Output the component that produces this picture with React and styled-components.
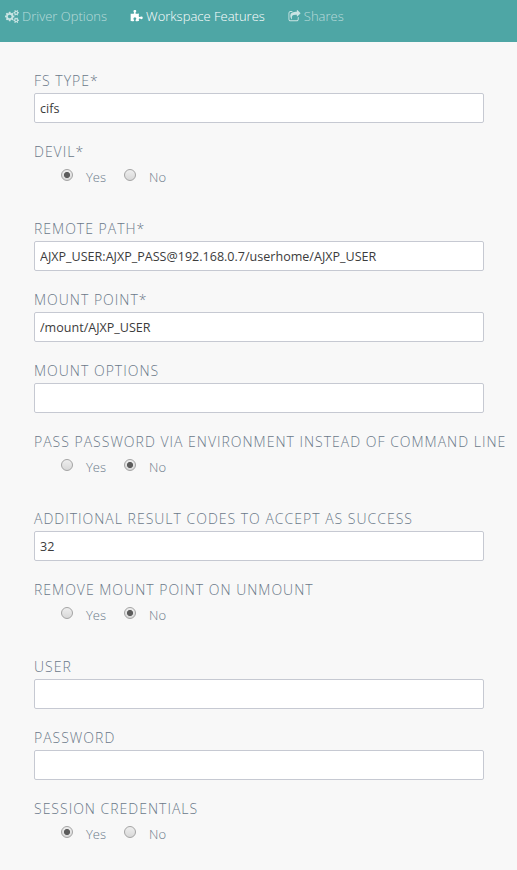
import React from "react";
import styled, { createGlobalStyle } from "styled-components";

const Global = createGlobalStyle`
  * { box-sizing: border-box; }
  body { margin: 0; background: #f8f8f8; font-family: "Open Sans", sans-serif; overflow: hidden; }
`;

const Page = styled.div`
  width: 517px;
  height: 870px;
  overflow: hidden;
  background: #f8f8f8;
`;

const TabBar = styled.nav`
  display: flex;
  height: 42px;
  padding: 6px 0 0 5px;
  gap: 23px;
  background: #4ea6a5;
`;

const Tab = styled.a`
  display: flex;
  gap: 3px;
  height: 19px;
  align-items: center;
  font-size: 13px;
  font-weight: 300;
  white-space: nowrap;
  color: ${(p) => (p.$active ? "#fff" : "rgba(255,255,255,0.6)")};
`;

const Icon = styled.svg`
  flex: none;
  display: block;
  height: 13px;
  margin-top: 1px;
  width: ${(p) => p.$width}px;
  fill: ${(p) => (p.$solid ? "#fff" : "rgba(255,255,255,0.7)")};
`;

const Form = styled.form`
  padding: 28px 0 0 34px;
`;

const Field = styled.div`
  height: ${(p) => (p.$choice ? 77 : 71)}px;
`;

const Label = styled.div`
  height: 23px;
  line-height: 22px;
  font-size: 14px;
  font-weight: 300;
  letter-spacing: 1px;
  text-transform: uppercase;
  white-space: nowrap;
  color: #6b7889;
`;

const Input = styled.input`
  display: block;
  width: 450px;
  height: 30px;
  padding: 0 5px;
  border: 1px solid #c6c9d2;
  border-radius: 2px;
  background: #fff;
  font: 400 12.56px "Open Sans", sans-serif;
  color: #3c3c3c;
  outline: none;
`;

const Choices = styled.div`
  display: flex;
  padding: 1px 0 0 27px;
  height: 25px;
`;

const Choice = styled.label`
  display: flex;
  width: 63px;
  gap: 13px;
  font-size: 13px;
  line-height: 24px;
  font-weight: 300;
  color: #6b7889;
`;

const Dot = styled.span`
  width: 12px;
  height: 12px;
  margin-top: 4px;
  border: 1px solid #a4a4a4;
  border-radius: 50%;
  background: ${(p) => (p.$on ? "radial-gradient(circle, #5c5c5c 0 2.7px, transparent 3.4px)," : "")}
    linear-gradient(#eee, #d8d8d8);
`;

const fields = [
  { label: "FS Type*", value: "cifs" },
  { label: "Devil*", choice: "Yes" },
  { label: "Remote Path*", value: "AJXP_USER:AJXP_PASS@192.168.0.7/userhome/AJXP_USER" },
  { label: "Mount Point*", value: "/mount/AJXP_USER" },
  { label: "Mount Options", value: "" },
  { label: "Pass password via environment instead of command line", choice: "No" },
  { label: "Additional result codes to accept as success", value: "32" },
  { label: "Remove mount point on unmount", choice: "No" },
  { label: "User", value: "" },
  { label: "Password", value: "" },
  { label: "Session credentials", choice: "Yes" },
];

const smallCog =
  "v140q0 16-149 31-12 27-30 52 51 113 51 138 0 4-4 7-122 71-124 71-8 0-46-47t-52-68q-20 2-30 2t-30-2q-14 21-52 68t-46 47q-2 0-124-71-4-3-4-7 0-25 51-138-18-25-30-52-149-15-149-31v-140q0-16 149-31 13-29 30-52-51-113-51-138 0-4 4-7 4-2 35-20t59-34 30-16q8 0 46 46.500t52 67.500q20-2 30-2t30 2q51-71 92-112l6-2q4 0 124 70 4 3 4 7 0 25-51 138 17 23 30 52 149 15 149 31z";

function CogsIcon() {
  return (
    <Icon $width={14} viewBox="0 0 1920 1792">
      <path d="M896 896q0-106-75-181t-181-75-181 75-75 181 75 181 181 75 181-75 75-181zM1280 805v185q0 10-7 19.500t-16 10.500l-155 24q-11 35-32 76 34 48 90 115 7 11 7 20 0 12-7 19-23 30-82.500 89.500t-78.500 59.500q-11 0-21-7l-115-90q-37 19-77 31-11 108-23 155-7 24-30 24h-186q-11 0-20-7.500t-10-17.500l-23-153q-34-10-75-31l-118 89q-7 7-20 7-11 0-21-8-144-133-144-160 0-9 7-19 10-14 41-53t47-61q-23-44-35-82l-152-24q-10-1-17-9.500t-7-19.500v-185q0-10 7-19.500t16-10.500l155-24q11-35 32-76-34-48-90-115-7-11-7-20 0-12 7-20 22-30 82-89t79-59q11 0 21 7l115 90q34-18 77-32 11-108 23-154 7-24 30-24h186q11 0 20 7.500t10 17.500l23 153q34 10 75 31l118-89q8-7 20-7 11 0 21 8 144 133 144 160 0 8-7 19-12 16-42 54t-45 60q23 48 34 82l152 23q10 2 17 10.500t7 19.500z" fillRule="evenodd" />
      <path fillRule="evenodd" d={`M1664 1408q0-52-38-90t-90-38-90 38-38 90q0 53 37.500 90.500t90.500 37.500 90.500-37.500 37.500-90.500zM1920 1338${smallCog}`} />
      <path fillRule="evenodd" d={`M1664 384q0-52-38-90t-90-38-90 38-38 90q0 53 37.500 90.500t90.500 37.500 90.500-37.500 37.500-90.500zM1920 314${smallCog}`} />
    </Icon>
  );
}

function PuzzleIcon() {
  return (
    <Icon $width={13} $solid viewBox="0 0 1792 1792">
      <path d="M1755 1083q0 81-44.500 135t-123.500 54q-41 0-77.500-17.500t-59-38-56.500-38-71-17.500q-110 0-110 124 0 39 16 115t15 115v5q-22 0-33 1-34 3-97.500 11.500t-115.500 13.500-98 5q-61 0-103-26.500t-42-83.500q0-37 17.500-71t38-56.500 38-59 17.500-77.500q0-79-54-123.500t-135-44.500q-84 0-143 45.500t-59 127.500q0 43 15 83t33.500 64.500 33.500 53 15 50.500q0 45-46 89-37 35-117 35-95 0-245-24-9-2-27.500-4t-27.500-4l-13-2q-1 0-3-1-2 0-2-1v-1024q2 1 17.500 3.500t34 5 21.500 3.500q150 24 245 24 80 0 117-35 46-44 46-89 0-22-15-50.500t-33.500-53-33.500-64.500-15-83q0-82 59-127.500t144-45.500q80 0 134 44.500t54 123.500q0 41-17.500 77.500t-38 59-38 56.500-17.500 71q0 57 42 83.500t103 26.500q64 0 180-15t163-17v2q-1 2-3.500 17.500t-5 34-3.500 21.500q-24 150-24 245 0 80 35 117 44 46 89 46 22 0 50.500-15t53-33.500 64.500-33.500 83-15q82 0 127.500 59t45.500 143z" />
    </Icon>
  );
}

function ShareIcon() {
  return (
    <Icon $width={13} viewBox="0 0 1664 1792">
      <path d="M1408 1003v259q0 119-84.500 203.500t-203.500 84.500h-832q-119 0-203.500-84.500t-84.500-203.500v-832q0-119 84.500-203.500t203.500-84.500h255q13 0 22.500 9.500t9.500 22.500q0 27-26 32-77 26-133 60-10 4-16 4h-112q-66 0-113 47t-47 113v832q0 66 47 113t113 47h832q66 0 113-47t47-113v-214q0-19 18-29 28-13 54-37 16-16 35-8 21 9 21 29zM1645 493l-384 384q-18 19-45 19-12 0-25-5-39-17-39-59v-192h-160q-323 0-438 131-119 137-74 473 3 23-20 34-8 2-12 2-16 0-26-13-10-14-21-31t-39.500-68.500-49.500-99.500-38.500-114-17.500-122q0-49 3.500-91t14-90 28-88 47-81.500 68.500-74 94.500-61.500 124.500-48.500 159.500-30.500 196.500-11h160v-192q0-42 39-59 13-5 25-5 26 0 45 19l384 384q19 19 19 45t-19 45z" />
    </Icon>
  );
}

export default function App() {
  return (
    <Page>
      <Global />
      <TabBar>
        <Tab><CogsIcon />Driver Options</Tab>
        <Tab $active><PuzzleIcon />Workspace Features</Tab>
        <Tab><ShareIcon />Shares</Tab>
      </TabBar>
      <Form>
        {fields.map((f) => (
          <Field key={f.label} $choice={!!f.choice}>
            <Label>{f.label}</Label>
            {f.choice ? (
              <Choices>
                {["Yes", "No"].map((c) => (
                  <Choice key={c}><Dot $on={c === f.choice} />{c}</Choice>
                ))}
              </Choices>
            ) : (
              <Input defaultValue={f.value} />
            )}
          </Field>
        ))}
      </Form>
    </Page>
  );
}
